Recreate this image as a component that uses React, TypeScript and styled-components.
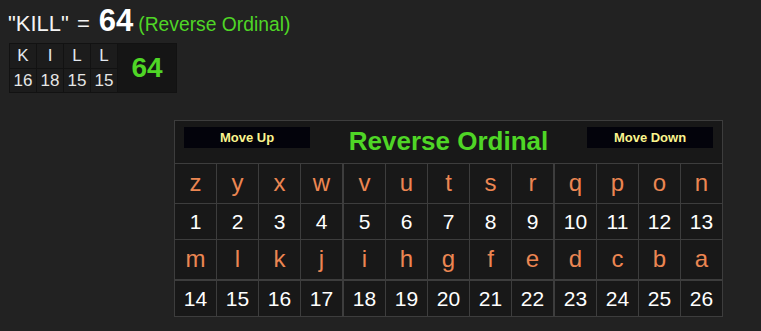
import React from 'react';
import styled, { createGlobalStyle } from 'styled-components';

const Global = createGlobalStyle`
  html, body { margin: 0; padding: 0; background: #222222; }
  body {
    font-family: "Liberation Sans", Arial, sans-serif;
    color: #ffffff;
    width: 761px;
    height: 331px;
    overflow: hidden;
  }
`;

const Page = styled.div`
  padding: 4px 0 0 8px;
  display: flex;
  flex-direction: column;
  align-items: flex-start;
`;

const Title = styled.div`
  height: 39px;
  display: flex;
  align-items: baseline;
  line-height: 34px;
`;

const Word = styled.span`
  font-size: 22px;
  color: #f4f4f4;
`;

const Eq = styled.span`
  font-size: 22px;
  color: #f4f4f4;
  margin: 0 9px 0 8px;
`;

const Total = styled.span`
  font-size: 31px;
  font-weight: bold;
  color: #ffffff;
`;

const CipherName = styled.span`
  font-size: 19.3px;
  color: #4fd626;
  margin-left: 5px;
`;

const Mini = styled.div`
  margin: 0 0 27px 1px;
  display: flex;
  gap: 1px;
  padding: 1px;
  background: #121212;
`;

const MiniGrid = styled.div`
  display: grid;
  grid-template-columns: repeat(4, 26px);
  grid-template-rows: 24px 23px;
  gap: 1px;
`;

const MiniCell = styled.div<{ $letter?: boolean }>`
  background: #1c1c1c;
  color: ${(p) => (p.$letter ? '#e2e8f0' : '#e6e6e6')};
  font-size: 17px;
  display: flex;
  align-items: center;
  justify-content: center;
  padding-top: ${(p) => (p.$letter ? '0' : '1px')};
`;

const MiniTotal = styled.div`
  width: 58px;
  background: #151515;
  color: #4fd626;
  font-size: 28px;
  font-weight: bold;
  display: flex;
  align-items: center;
  justify-content: center;
`;

const Chart = styled.div`
  margin-left: 166px;
  width: 547px;
  border: 1px solid #3d3d3d;
  background: #181818;
`;

const ChartHead = styled.div`
  height: 36px;
  padding: 6px 9px 0 9px;
  border-bottom: 1px solid #3d3d3d;
  display: flex;
  justify-content: space-between;
  align-items: flex-start;
`;

const MoveButton = styled.div`
  width: 126px;
  height: 21px;
  background: #03030b;
  color: #fbf58e;
  font-size: 13px;
  font-weight: bold;
  display: flex;
  align-items: center;
  justify-content: center;
`;

const ChartTitle = styled.div`
  font-size: 26px;
  line-height: 28px;
  font-weight: bold;
  color: #4fd626;
`;

const Grid = styled.div`
  display: grid;
  grid-template-columns: repeat(13, auto);
`;

const Cell = styled.div<{
  $letter: boolean;
  $right: number;
  $bottom: number;
}>`
  width: 41px;
  height: ${(p) => (p.$letter ? 37 : 35)}px;
  border-right: ${(p) => p.$right}px solid #3d3d3d;
  border-bottom: ${(p) => p.$bottom}px solid #3d3d3d;
  display: flex;
  align-items: center;
  justify-content: center;
  color: ${(p) => (p.$letter ? '#ec8652' : '#ffffff')};
  font-size: ${(p) => (p.$letter ? 24 : 21)}px;
  padding-bottom: ${(p) => (p.$letter ? 2 : 0)}px;
  box-sizing: content-box;
`;

const word = [
  ['K', 16],
  ['I', 18],
  ['L', 15],
  ['L', 15],
] as const;

const alphabet = 'zyxwvutsrqponmlkjihgfedcba'.split('');

const rows: { letter: boolean; items: string[] }[] = [
  { letter: true, items: alphabet.slice(0, 13) },
  { letter: false, items: Array.from({ length: 13 }, (_, i) => String(i + 1)) },
  { letter: true, items: alphabet.slice(13) },
  { letter: false, items: Array.from({ length: 13 }, (_, i) => String(i + 14)) },
];

export default function App() {
  return (
    <>
      <Global />
      <Page>
        <Title>
          <Word>"KILL"</Word>
          <Eq>=</Eq>
          <Total>64</Total>
          <CipherName>(Reverse Ordinal)</CipherName>
        </Title>
        <Mini>
          <MiniGrid>
            {word.map(([l], i) => (
              <MiniCell key={'l' + i} $letter>
                {l}
              </MiniCell>
            ))}
            {word.map(([, v], i) => (
              <MiniCell key={'v' + i}>{v}</MiniCell>
            ))}
          </MiniGrid>
          <MiniTotal>64</MiniTotal>
        </Mini>
        <Chart>
          <ChartHead>
            <MoveButton>Move Up</MoveButton>
            <ChartTitle>Reverse Ordinal</ChartTitle>
            <MoveButton>Move Down</MoveButton>
          </ChartHead>
          <Grid>
            {rows.map((row, r) =>
              row.items.map((t, c) => (
                <Cell
                  key={r + '-' + c}
                  $letter={row.letter}
                  $right={c === 12 ? 0 : c === 3 || c === 8 ? 2 : 1}
                  $bottom={r === 3 ? 0 : r === 2 ? 2 : 1}
                >
                  {t}
                </Cell>
              ))
            )}
          </Grid>
        </Chart>
      </Page>
    </>
  );
}
